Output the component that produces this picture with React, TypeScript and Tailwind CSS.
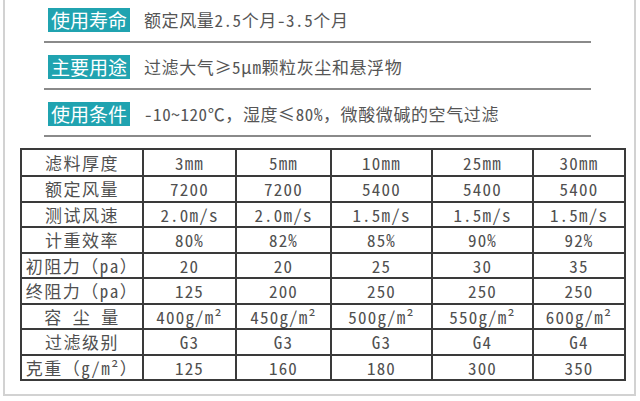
import React from "react";

const cjk = { fontFamily: '"Noto Sans Mono CJK SC", "Noto Sans CJK SC", sans-serif' };

const specs = [
  { label: "使用寿命", value: "额定风量2.5个月-3.5个月" },
  { label: "主要用途", value: "过滤大气≥5μm颗粒灰尘和悬浮物" },
  { label: "使用条件", value: "-10~120℃，湿度≤80%，微酸微碱的空气过滤" },
];

const rows: string[][] = [
  ["滤料厚度", "3mm", "5mm", "10mm", "25mm", "30mm"],
  ["额定风量", "7200", "7200", "5400", "5400", "5400"],
  ["测试风速", "2.0m/s", "2.0m/s", "1.5m/s", "1.5m/s", "1.5m/s"],
  ["计重效率", "80%", "82%", "85%", "90%", "92%"],
  ["初阻力（pa）", "20", "20", "25", "30", "35"],
  ["终阻力（pa）", "125", "200", "250", "250", "250"],
  ["容 尘 量", "400g/m²", "450g/m²", "500g/m²", "550g/m²", "600g/m²"],
  ["过滤级别", "G3", "G3", "G3", "G4", "G4"],
  ["克重（g/m²）", "125", "160", "180", "300", "350"],
];

const colWidths = ["w-[122px]", "w-[93px]", "w-[95px]", "w-[101px]", "w-[101px]", "w-[92px]"];

export default function App() {
  return (
    <div className="w-[640px] h-[401px] bg-white overflow-hidden" style={cjk}>
      <div className="ml-[3px] w-[633px] h-[396px] border-x-2 border-b-2 border-[#d2d2d2] bg-white">
        {/* spec lines */}
        <div className="ml-[39px] w-[547px] pt-[8px]">
          {specs.map((s) => (
            <div key={s.label} className="mb-[12px]">
              <div className="flex items-center">
                <span className="ml-[4px] h-[24px] w-[82px] bg-[#20a3b0] text-white text-[19px] leading-[24px] text-center">
                  {s.label}
                </span>
                <span className="ml-[14px] text-[17px] leading-[24px] text-[#555] tracking-[0.6px]">{s.value}</span>
              </div>
              <div className="mt-[9px] h-[2px] bg-[#8a8a8a]" />
            </div>
          ))}
        </div>

        {/* parameter table */}
        <table className="ml-[15px] -mt-[1px] border-collapse table-fixed text-[#505050] text-[17px]">
          <colgroup>
            {colWidths.map((w, i) => (
              <col key={i} className={w} />
            ))}
          </colgroup>
          <tbody>
            {rows.map((r, ri) => (
              <tr key={ri} className={ri === 0 ? "h-[27px]" : "h-[25.5px]"}>
                {r.map((c, ci) => (
                  <td
                    key={ci}
                    className={
                      "border-2 border-[#3a3a3a] p-0 text-center leading-[21px] whitespace-nowrap " +
                      (ci === 0 ? "tracking-[1.5px]" : "tracking-[1.2px]")
                    }
                  >
                    {c}
                  </td>
                ))}
              </tr>
            ))}
          </tbody>
        </table>
      </div>
    </div>
  );
}
